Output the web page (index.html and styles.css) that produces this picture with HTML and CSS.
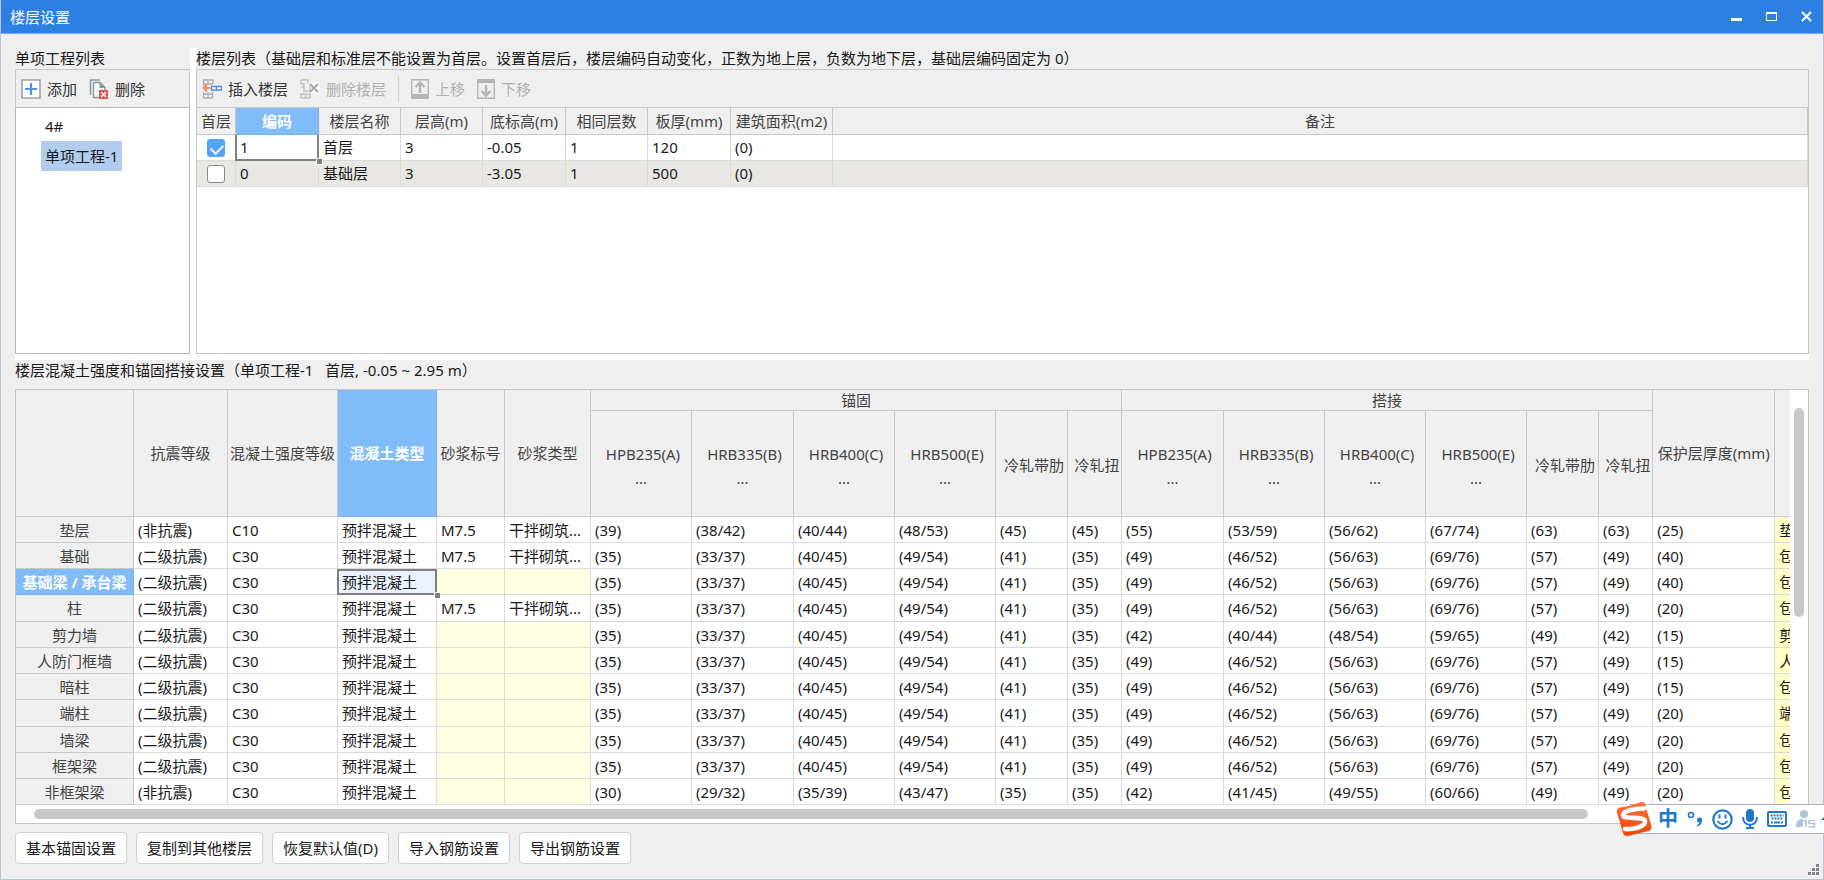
FILE: index.html
```html
<!DOCTYPE html>
<html lang="zh-CN">
<head>
<meta charset="utf-8">
<title>楼层设置</title>
<link rel="stylesheet" href="styles.css">
</head>
<body>
<div class="window">
<header class="titlebar">
  <h1>楼层设置</h1>
  <div class="controls">
    <button type="button" aria-label="最小化"><svg width="11" height="11"><path d="M0 8.5h11" stroke="#fff" stroke-width="3"/></svg></button>
    <button type="button" aria-label="最大化"><svg width="11" height="11"><path d="M.5 1.5h10v8h-10z" fill="none" stroke="#fff"/><path d="M0 2h11" stroke="#fff" stroke-width="2"/></svg></button>
    <button type="button" aria-label="关闭"><svg width="11" height="11"><path d="M1 1l9 9M10 1l-9 9" stroke="#fff" stroke-width="2"/></svg></button>
  </div>
</header>
<main>
<div class="upper">
  <section class="projects">
    <h2>单项工程列表</h2>
    <div class="toolbar">
      <button type="button" class="tool"><svg width="20" height="20"><path d="M1 1h18v18H1z" fill="#fff" stroke="#9aa3a8" stroke-width="1.6"/><path d="M10 4v12M4 10h12" stroke="#4595ea" stroke-width="2"/></svg>添加</button>
      <button type="button" class="tool"><svg width="20" height="20"><path d="M1.5 16V1H11" fill="none" stroke="#8d989e" stroke-width="1.5"/><path d="M4.5 3.5h6.500l5 5V18.500H4.500z" fill="#f6f6f6" stroke="#8d989e" stroke-width="1.4"/><path d="M10.500 3v6H17z" fill="#8d989e"/><path d="M10 11h9v9h-9z" fill="#dc5555"/><path d="M12 13l5 5M17 13l-5 5" stroke="#fff" stroke-width="1.4"/></svg>删除</button>
    </div>
    <ul class="tree">
      <li><a href="#p4">4#</a></li>
      <li><a href="#p1" class="current">单项工程-1</a></li>
    </ul>
  </section>
  <section class="floors">
    <h2>楼层列表（基础层和标准层不能设置为首层。设置首层后，楼层编码自动变化，正数为地上层，负数为地下层，基础层编码固定为 0）</h2>
    <div class="toolbar">
      <button type="button" class="tool"><svg width="20" height="20"><path d="M1.500 5V1H11v4M6 1v4M1 5h10M1.500 5v2M1.500 19v-6M1.500 15h9v4h-9M6 13v6M10.500 13v6" fill="none" stroke="#a3b0b6" stroke-width="1.300"/><path d="M9.500 7.500h10v3.500h-10zM14.500 7.500v3.500" fill="#fff" stroke="#4b8fdd" stroke-width="1.500"/><path d="M8 9H2M5 5.500L1.500 9 5 12.500" fill="none" stroke="#f58a5c" stroke-width="2"/></svg>插入楼层</button>
      <button type="button" class="tool" disabled><svg width="20" height="20"><path d="M8 3h12v12H8z" fill="#f8f8f8"/><path d="M1 1h7v4M1 1v4h3v7h6V6M1 8h3M1 19v-4h9v4zM5.500 15v4" fill="none" stroke="#c2c2c2" stroke-width="1.400"/><path d="M10 5l8 8M18 5l-8 8" stroke="#a9a9a9" stroke-width="2"/></svg>删除楼层</button>
      <span class="divider"></span>
      <button type="button" class="tool" disabled><svg width="18" height="20"><path d="M.7.7h16.600v18.600H.7z" fill="none" stroke="#b4b4b4" stroke-width="1.400"/><path d="M0 15h18v5H0z" fill="#b4b4b4"/><path d="M9 14V4M4.500 8L9 3.500 13.500 8" fill="none" stroke="#b4b4b4" stroke-width="2.400"/></svg>上移</button>
      <button type="button" class="tool" disabled><svg width="18" height="20"><path d="M.7.7h16.600v18.600H.7z" fill="none" stroke="#b4b4b4" stroke-width="1.400"/><path d="M0 0h18v4H0z" fill="#b4b4b4"/><path d="M9 6v10M4.500 12L9 16.500 13.500 12" fill="none" stroke="#b4b4b4" stroke-width="2.400"/></svg>下移</button>
    </div>
    <div class="floor-box">
      <table class="floor-table">
        <colgroup><col class="f1"><col class="f2"><col class="f3"><col class="f4"><col class="f5"><col class="f4"><col class="f5"><col class="f6"><col></colgroup>
        <thead><tr><th>首层<th class="active">编码<th>楼层名称<th>层高(m)<th>底标高(m)<th>相同层数<th>板厚(mm)<th>建筑面积(m2)<th>备注</tr></thead>
        <tbody>
          <tr><td class="check"><input type="checkbox" aria-label="首层：首层" checked><td class="cursor">1<td>首层<td>3<td>-0.05<td>1<td>120<td>(0)<td></tr>
          <tr><td class="check"><input type="checkbox" aria-label="首层：基础层"><td>0<td>基础层<td>3<td>-3.05<td>1<td>500<td>(0)<td></tr>
        </tbody>
      </table>
    </div>
  </section>
</div>
<section class="settings">
  <h2>楼层混凝土强度和锚固搭接设置（单项工程-1&nbsp;&nbsp; 首层, -0.05 ~ 2.95 m）</h2>
  <div class="grid-box">
    <div class="viewport">
    <table class="grid">
      <colgroup><col class="g0"><col class="g1"><col class="g2"><col class="g3"><col class="g4"><col class="g5"><col class="gs"><col class="gm"><col class="gs"><col class="gs"><col class="gr"><col class="gt"><col class="gm"><col class="gs"><col class="gs"><col class="gs"><col class="gr"><col class="gt"><col class="gp"><col class="gn"></colgroup>
      <thead>
        <tr><td rowspan="2"></td><th rowspan="2">抗震等级<th rowspan="2">混凝土强度等级<th rowspan="2" class="active">混凝土类型<th rowspan="2">砂浆标号<th rowspan="2">砂浆类型<th colspan="6">锚固<th colspan="6">搭接<th rowspan="2">保护层厚度(mm)<th rowspan="2"></tr>
        <tr class="grades"><th><span>HPB235(A)</span>...<th><span>HRB335(B)</span>...<th><span>HRB400(C)</span>...<th><span>HRB500(E)</span>...<th><b>冷轧带肋</b><th><b>冷轧扭</b><th><span>HPB235(A)</span>...<th><span>HRB335(B)</span>...<th><span>HRB400(C)</span>...<th><span>HRB500(E)</span>...<th><b>冷轧带肋</b><th><b>冷轧扭</b></tr>
      </thead>
      <tbody>
        <tr><th>垫层<td>(非抗震)<td>C10<td>预拌混凝土<td>M7.5<td>干拌砌筑...<td>(39)<td>(38/42)<td>(40/44)<td>(48/53)<td>(45)<td>(45)<td>(55)<td>(53/59)<td>(56/62)<td>(67/74)<td>(63)<td>(63)<td>(25)<td class="note">垫层</tr>
        <tr><th>基础<td>(二级抗震)<td>C30<td>预拌混凝土<td>M7.5<td>干拌砌筑...<td>(35)<td>(33/37)<td>(40/45)<td>(49/54)<td>(41)<td>(35)<td>(49)<td>(46/52)<td>(56/63)<td>(69/76)<td>(57)<td>(49)<td>(40)<td class="note">包含</tr>
        <tr><th class="active">基础梁 / 承台梁<td>(二级抗震)<td>C30<td class="cursor boxed">预拌混凝土<td class="na"><td class="na"><td>(35)<td>(33/37)<td>(40/45)<td>(49/54)<td>(41)<td>(35)<td>(49)<td>(46/52)<td>(56/63)<td>(69/76)<td>(57)<td>(49)<td>(40)<td class="note">包含</tr>
        <tr><th>柱<td>(二级抗震)<td>C30<td>预拌混凝土<td>M7.5<td>干拌砌筑...<td>(35)<td>(33/37)<td>(40/45)<td>(49/54)<td>(41)<td>(35)<td>(49)<td>(46/52)<td>(56/63)<td>(69/76)<td>(57)<td>(49)<td>(20)<td class="note">包含</tr>
        <tr><th>剪力墙<td>(二级抗震)<td>C30<td>预拌混凝土<td class="na"><td class="na"><td>(35)<td>(33/37)<td>(40/45)<td>(49/54)<td>(41)<td>(35)<td>(42)<td>(40/44)<td>(48/54)<td>(59/65)<td>(49)<td>(42)<td>(15)<td class="note">剪力</tr>
        <tr><th>人防门框墙<td>(二级抗震)<td>C30<td>预拌混凝土<td class="na"><td class="na"><td>(35)<td>(33/37)<td>(40/45)<td>(49/54)<td>(41)<td>(35)<td>(49)<td>(46/52)<td>(56/63)<td>(69/76)<td>(57)<td>(49)<td>(15)<td class="note">人防</tr>
        <tr><th>暗柱<td>(二级抗震)<td>C30<td>预拌混凝土<td class="na"><td class="na"><td>(35)<td>(33/37)<td>(40/45)<td>(49/54)<td>(41)<td>(35)<td>(49)<td>(46/52)<td>(56/63)<td>(69/76)<td>(57)<td>(49)<td>(15)<td class="note">包含</tr>
        <tr><th>端柱<td>(二级抗震)<td>C30<td>预拌混凝土<td class="na"><td class="na"><td>(35)<td>(33/37)<td>(40/45)<td>(49/54)<td>(41)<td>(35)<td>(49)<td>(46/52)<td>(56/63)<td>(69/76)<td>(57)<td>(49)<td>(20)<td class="note">端柱</tr>
        <tr><th>墙梁<td>(二级抗震)<td>C30<td>预拌混凝土<td class="na"><td class="na"><td>(35)<td>(33/37)<td>(40/45)<td>(49/54)<td>(41)<td>(35)<td>(49)<td>(46/52)<td>(56/63)<td>(69/76)<td>(57)<td>(49)<td>(20)<td class="note">包含</tr>
        <tr><th>框架梁<td>(二级抗震)<td>C30<td>预拌混凝土<td class="na"><td class="na"><td>(35)<td>(33/37)<td>(40/45)<td>(49/54)<td>(41)<td>(35)<td>(49)<td>(46/52)<td>(56/63)<td>(69/76)<td>(57)<td>(49)<td>(20)<td class="note">包含</tr>
        <tr><th>非框架梁<td>(非抗震)<td>C30<td>预拌混凝土<td class="na"><td class="na"><td>(30)<td>(29/32)<td>(35/39)<td>(43/47)<td>(35)<td>(35)<td>(42)<td>(41/45)<td>(49/55)<td>(60/66)<td>(49)<td>(49)<td>(20)<td class="note">包含</tr>
      </tbody>
    </table>
    </div>
    <div class="vbar"><div class="thumb"></div></div>
    <div class="hbar"><div class="thumb"></div></div>
  </div>
</section>
</main>
<footer>
  <button type="button">基本锚固设置</button>
  <button type="button">复制到其他楼层</button>
  <button type="button">恢复默认值(D)</button>
  <button type="button">导入钢筋设置</button>
  <button type="button">导出钢筋设置</button>
</footer>
<svg class="grip" width="11" height="11" fill="#7d838c"><path d="M8 0h3v3H8zM4 4h3v3H4zM8 4h3v3H8zM0 8h3v3H0zM4 8h3v3H4zM8 8h3v3H8z"/></svg>
</div>
<aside class="ime" aria-label="输入法">
  <svg class="logo" width="36" height="36" viewBox="0 0 36 36"><defs><linearGradient id="flame" x1="0" y1="0" x2="0" y2="1"><stop offset="0" stop-color="#fa7440"/><stop offset="1" stop-color="#ee4406"/></linearGradient></defs><path d="M4 6.500Q16 4.500 25 1q3-1 4 2 3 11 6.500 22 .8 3.500-2.500 5-10 2-21 5-4 .5-5-3Q4 21 .7 11 .5 7.500 4 6.500z" fill="url(#flame)"/><path d="M28 7.500C18 7.500 6.500 10 7 14.500c.5 4 21.500.5 22 5.500C29.500 26 17 28.500 9 28" fill="none" stroke="#fff" stroke-width="4.600" stroke-linecap="round"/></svg>
  <span class="lang">中</span>
  <svg width="16" height="20"><circle cx="4" cy="6" r="2.500" fill="none" stroke="#2277c9" stroke-width="1.600"/><path d="M12.500 8.500a2.600 2.600 0 0 1 2.600 2.800c0 3-1.600 5.200-4.600 6.200l-.6-1.200c1.500-.7 2.300-1.600 2.500-2.800a2.500 2.500 0 1 1 .1-5z" fill="#2277c9"/></svg>
  <svg width="21" height="21"><circle cx="10.500" cy="10.500" r="9.200" fill="none" stroke="#2277c9" stroke-width="2.200"/><path d="M7.500 5.500v4M13.500 5.500v4" stroke="#2277c9" stroke-width="2"/><path d="M5.500 12q5 6.500 10 0" fill="none" stroke="#2277c9" stroke-width="1.800"/></svg>
  <svg width="16" height="20"><rect x="4" y="0" width="8" height="13" rx="4" fill="#2277c9"/><path d="M1.200 8v1.500a6.800 6.300 0 0 0 13.600 0V8M8 16v3M4 19h8" fill="none" stroke="#2277c9" stroke-width="2"/></svg>
  <svg width="20" height="16"><rect x="1" y="1" width="18" height="14" rx="1" fill="none" stroke="#2277c9" stroke-width="2"/><path d="M3.500 4.500h13M4.500 7.500h12" stroke="#2277c9" stroke-width="2" stroke-dasharray="2 1"/><path d="M4 11.500h2M7 11.500h6M14 11.500h2" stroke="#2277c9" stroke-width="2"/></svg>
  <svg width="20" height="18"><g fill="#b5c1d9"><circle cx="8" cy="4" r="4"/><path d="M0 17q0-8 6-8h4q3 0 4 2H7v6z"/></g><rect x="7" y="9" width="13" height="9" fill="#fff"/><path d="M7.500 10.500h2.500V17M19 10.500h-6v3h5.500V17h-6" fill="none" stroke="#b5c1d9" stroke-width="1.600"/></svg>
  <svg class="more" width="6" height="8"><path d="M0 4l4-4h2v4z" fill="#2277c9"/></svg>
</aside>
</body>
</html>
```

FILE: styles.css
```css
* { box-sizing: border-box; }
body {
  margin: 0;
  font: 15px/22px "Noto Sans", "Noto Sans CJK SC", sans-serif;
  color: #1a1a1a;
}
h1, h2 { margin: 0; font-size: 15px; font-weight: 400; white-space: nowrap; }
button { font: inherit; color: inherit; }
svg { display: block; flex: none; }

.window {
  position: relative;
  display: flex;
  flex-direction: column;
  min-height: 100vh;
  overflow: hidden;
  background: #efefef;
  border: 1px solid #b9c4d6;
  border-top: 0;
}
.titlebar {
  display: flex;
  align-items: center;
  justify-content: space-between;
  height: 34px;
  margin: 0 -1px;
  padding: 0 0 0 10px;
  background: #2d80e2;
  border-bottom: 1px solid #75a9e8;
  color: #fff;
}
.controls { display: flex; }
.controls button {
  display: grid;
  place-items: center;
  width: 35px;
  height: 33px;
  padding: 0;
  border: 0;
  background: none;
}

main {
  display: flex;
  flex: 1;
  flex-direction: column;
  padding: 14px 14px 0;
}
.upper {
  display: flex;
  flex: 1;
  gap: 6px;
  background: #fff;
  border-bottom: 6px solid #fff;
}
.upper section { display: flex; flex-direction: column; }
.upper h2 { height: 21px; line-height: 20px; background: #efefef; }
.projects { flex: 0 0 175px; }
.floors { flex: 1; min-width: 0; }
.toolbar {
  display: flex;
  align-items: center;
  gap: 12px;
  height: 38px;
  padding: 0 5px;
  background: #efefef;
  border: 1px solid #c8c8cc;
  border-bottom: 0;
}
.tool {
  display: flex;
  align-items: center;
  gap: 6px;
  padding: 0;
  border: 0;
  background: none;
  color: #333;
  white-space: nowrap;
}
.tool:disabled { color: #b0b0b0; }
.divider { width: 1px; height: 26px; background: #d0d0d0; }
.tree {
  flex: 1;
  margin: 0;
  padding: 3px 0 0 25px;
  list-style: none;
  background: #fff;
  border: 1px solid #b8b8b8;
}
.tree a {
  display: inline-block;
  padding: 4px;
  color: inherit;
  text-decoration: none;
}
.tree li { height: 30px; }
.tree .current { background: #b1ccee; }

table { border-collapse: separate; border-spacing: 0; table-layout: fixed; }
th, td {
  padding: 0 0 0 4px;
  border: solid #dadada;
  border-width: 0 1px 1px 0;
  text-align: left;
  font-weight: 400;
  white-space: nowrap;
  overflow: hidden;
}
th, thead td {
  padding: 0;
  background: #efefef;
  border-color: #c8c8c8;
  color: #444;
  text-align: center;
}
th.active {
  background: #80bbfa;
  border-color: #74b0f2;
  color: #fff;
  font-weight: 700;
}

.floor-box {
  flex: 1;
  min-height: 200px;
  border: 1px solid #c8c8c8;
  background: #fff;
}
.floor-table { width: 100%; }
.floor-table tr { height: 26px; }
.floor-table thead tr { height: 27px; }
.floor-table td { padding-bottom: 2px; }
.floor-table tbody tr:nth-child(2) { background: #e8e7e3; }
.f1 { width: 39px; }
.f2 { width: 83px; }
.f3, .f4 { width: 82px; }
.f5 { width: 83px; }
.f6 { width: 102px; }
.floor-table .check { padding: 0; }
.check input {
  display: block;
  position: relative;
  appearance: none;
  width: 18px;
  height: 18px;
  margin: 0 auto;
  border: 1px solid #8a8a8a;
  border-radius: 3px;
  background: #fff;
}
.check input:checked { background: #55a3f8; border-color: #55a3f8; }
.check input:checked::after {
  content: "";
  position: absolute;
  left: 5px;
  top: 2px;
  width: 6px;
  height: 10px;
  border: solid #fff;
  border-width: 0 2px 2px 0;
  transform: rotate(45deg);
}
.cursor { position: relative; overflow: visible; }
.cursor::before {
  content: "";
  position: absolute;
  inset: 0 -1px -1px -1px;
  border: 2px solid #808080;
  border-top: 0;
}
.cursor::after {
  content: "";
  position: absolute;
  right: -4px;
  bottom: -4px;
  width: 5px;
  height: 5px;
  background: #808080;
  outline: 1px solid #fff;
}
.boxed { background: #e9f3ff; }
.boxed::before { border-top: 2px solid #808080; }

.settings h2 { padding-bottom: 8px; line-height: 21px; }
.grid-box {
  display: grid;
  grid-template-columns: minmax(0, 1fr) 18px;
  background: #fff;
  border: 1px solid #c4c4c4;
}
.viewport { overflow: hidden; }
.grid { width: 1880px; }
.g0 { width: 118px; }
.g1 { width: 94px; }
.g2 { width: 110px; }
.g3 { width: 99px; }
.g4 { width: 68px; }
.g5 { width: 86px; }
.gs { width: 101px; }
.gm { width: 102px; }
.gr { width: 72px; }
.gt { width: 54px; }
.gp { width: 122px; }
.grid thead tr { height: 21px; }
.grid thead .grades { height: 106px; }
.grid thead th { line-height: 20px; }
.grid .grades th { line-height: 24px; padding-top: 4px; }
.grades span { display: block; padding-left: 4px; }
.grades b { display: block; padding: 0 0 2px 5px; font-weight: 400; }
.grid tbody tr { height: 26px; }
.grid tbody tr:nth-child(4n) { height: 27px; }
.na { background: #ffffe1; }
.note { background: #ffffc8; }
.thumb { background: #c8c8c8; border-radius: 5px; }
.vbar { padding: 18px 4px 0; }
.vbar .thumb { width: 10px; height: 209px; }
.hbar { height: 18px; padding: 4px 0 0 18px; }
.hbar .thumb { width: 1554px; max-width: 95%; height: 10px; }

footer { display: flex; gap: 9px; padding: 8px 14px 15px; }
footer button {
  height: 32px;
  padding: 0 10px;
  background: #fdfdfd;
  border: 1px solid #d0d0d0;
  border-radius: 4px;
}
.grip { position: absolute; right: 4px; bottom: 4px; }

.ime {
  position: fixed;
  right: 0;
  bottom: 46px;
  display: flex;
  align-items: center;
  gap: 9px;
  width: 194px;
  height: 30px;
  padding-left: 28px;
  overflow: visible;
  background: #fff;
  border: solid #a9b0be;
  border-width: 1px 0;
  color: #2277c9;
}
.logo { position: absolute; left: -14px; top: -4px; }
.more { position: absolute; right: -3px; top: 11px; }
.lang { font-size: 20px; font-weight: 700; }
```
